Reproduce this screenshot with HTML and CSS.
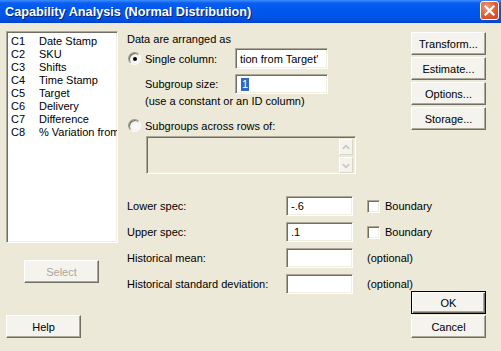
FILE: index.html
```html
<!DOCTYPE html>
<html>
<head>
<meta charset="utf-8">
<link rel="stylesheet" href="styles.css">
</head>
<body>
<div class="window">
  <div class="titlebar">
    <span class="title">Capability Analysis (Normal Distribution)</span>
    <span class="close"><svg width="17" height="17" viewBox="0 0 17 17"><path d="M4.5 4.5 L12.5 12.5 M12.5 4.5 L4.5 12.5" stroke="#fff" stroke-width="2.2" stroke-linecap="square"/></svg></span>
  </div>
  <div class="client">
    <div class="col-left">
      <div class="listbox">
        <div class="item"><span class="cid">C1</span><span class="cname">Date Stamp</span></div>
        <div class="item"><span class="cid">C2</span><span class="cname">SKU</span></div>
        <div class="item"><span class="cid">C3</span><span class="cname">Shifts</span></div>
        <div class="item"><span class="cid">C4</span><span class="cname">Time Stamp</span></div>
        <div class="item"><span class="cid">C5</span><span class="cname">Target</span></div>
        <div class="item"><span class="cid">C6</span><span class="cname">Delivery</span></div>
        <div class="item"><span class="cid">C7</span><span class="cname">Difference</span></div>
        <div class="item"><span class="cid">C8</span><span class="cname">% Variation from</span></div>
      </div>
      <div class="btn btn-select disabled">Select</div>
      <div class="btn btn-help">Help</div>
    </div>
    <div class="col-mid">
      <div class="group-label">Data are arranged as</div>
      <div class="row row-single">
        <span class="radio checked"><span class="dot"></span></span>
        <span class="rlabel">Single column:</span>
        <span class="field field-wide">tion from Target'</span>
      </div>
      <div class="row row-sub">
        <span class="sublabel">Subgroup size:</span>
        <span class="field field-wide"><span class="sel">1</span></span>
      </div>
      <div class="hint">(use a constant or an ID column)</div>
      <div class="row row-radio2">
        <span class="radio"></span>
        <span class="rlabel">Subgroups across rows of:</span>
      </div>
      <div class="multibox">
        <div class="spin">
          <span class="sbtn"><svg width="13" height="15" viewBox="0 0 13 15"><path d="M3 9 L6.5 5.5 L10 9" fill="none" stroke="#C9C7BA" stroke-width="1.6"/></svg></span>
          <span class="sbtn"><svg width="13" height="15" viewBox="0 0 13 15"><path d="M3 6 L6.5 9.5 L10 6" fill="none" stroke="#C9C7BA" stroke-width="1.6"/></svg></span>
        </div>
      </div>
      <div class="spec-row first">
        <span class="slabel">Lower spec:</span>
        <span class="field field-spec">-.6</span>
        <span class="check"></span>
        <span class="clabel">Boundary</span>
      </div>
      <div class="spec-row">
        <span class="slabel">Upper spec:</span>
        <span class="field field-spec">.1</span>
        <span class="check"></span>
        <span class="clabel">Boundary</span>
      </div>
      <div class="spec-row">
        <span class="slabel">Historical mean:</span>
        <span class="field field-spec"></span>
        <span class="opt">(optional)</span>
      </div>
      <div class="spec-row">
        <span class="slabel">Historical standard deviation:</span>
        <span class="field field-spec"></span>
        <span class="opt">(optional)</span>
      </div>
    </div>
    <div class="col-right">
      <div class="btn btn-first">Transform...</div>
      <div class="btn">Estimate...</div>
      <div class="btn">Options...</div>
      <div class="btn">Storage...</div>
      <div class="btn btn-ok">OK</div>
      <div class="btn btn-cancel">Cancel</div>
    </div>
  </div>
</div>
</body>
</html>
```
FILE: styles.css
```css
* { box-sizing: border-box; }
html, body { margin: 0; padding: 0; }
body {
  width: 501px;
  height: 351px;
  overflow: hidden;
  background: #ECE9D8;
  font-family: "Liberation Sans", Arial, sans-serif;
  font-size: 11px;
  color: #000;
}
.window { width: 501px; height: 351px; display: flex; flex-direction: column; }
.titlebar {
  height: 23px;
  flex: none;
  display: flex;
  align-items: center;
  justify-content: space-between;
  padding: 0 2px 0 5px;
  background: linear-gradient(to bottom, #3D8DFF 0px, #0A5FF0 3px, #0058EE 8px, #0055EA 16px, #0050E0 20px, #0040C8 23px);
}
.title {
  color: #fff;
  font-family: "Liberation Sans", Arial, sans-serif;
  font-weight: bold;
  font-size: 12.7px;
  text-shadow: 1px 1px 0 #0A1E6E;
}
.close {
  width: 19px;
  height: 19px;
  margin-top: -3px;
  border: 1px solid #fff;
  border-radius: 3px;
  background: radial-gradient(circle at 35% 30%, #F39B7D 0%, #E35A2E 55%, #C8421C 100%);
  display: flex;
  align-items: center;
  justify-content: center;
}
.client { flex: 1; display: flex; }

.col-left { width: 127px; flex: none; padding-left: 6px; display: flex; flex-direction: column; }
.listbox {
  margin-top: 8px;
  width: 112px;
  height: 212px;
  background: #fff;
  border: 1px solid;
  border-color: #ACA899 #fff #fff #ACA899;
  box-shadow: inset 1px 1px #716F64, inset -1px -1px #F1EFE2;
  padding: 3px 0 0 4px;
  overflow: hidden;
}
.item { height: 13px; line-height: 13px; display: flex; white-space: nowrap; }
.cid { width: 28px; flex: none; }
.cname { flex: none; }

.btn {
  width: 75px;
  height: 23px;
  display: flex;
  align-items: center;
  justify-content: center;
  background: #F4F3EE;
  border: 1px solid;
  border-color: #fff #716F64 #716F64 #fff;
  box-shadow: inset -1px -1px #ACA899;
  flex: none;
}
.disabled { color: #ACA899; }
.btn-select { margin-top: 17px; margin-left: 18px; }
.btn-help { margin-top: 32px; }

.col-mid { width: 284px; flex: none; display: flex; flex-direction: column; }
.group-label { margin-top: 10px; line-height: 13px; height: 13px; }
.row { display: flex; align-items: center; }
.row-single { margin-top: 2px; height: 21px; }
.row-single .field { height: 21px; }
.row-sub { margin-top: 5px; height: 20px; padding-left: 18px; }
.sublabel { width: 90px; flex: none; }
.radio {
  width: 13px;
  height: 13px;
  margin-left: 1px;
  margin-right: 4px;
  border-radius: 50%;
  border: 1px solid;
  border-color: #9D9B8E #fff #fff #9D9B8E;
  background: radial-gradient(circle at 60% 60%, #fff 0%, #F3F2EC 50%, #DCDAD0 100%);
  box-shadow: inset 1px 1px #716F64;
  display: flex;
  align-items: center;
  justify-content: center;
  flex: none;
}
.dot { width: 4px; height: 4px; border-radius: 50%; background: #000; }
.rlabel { width: 90px; flex: none; white-space: nowrap; }
.field {
  display: flex;
  align-items: center;
  background: #fff;
  border: 1px solid;
  border-color: #ACA899 #fff #fff #ACA899;
  box-shadow: inset 1px 1px #716F64, inset -1px -1px #F1EFE2;
  padding-left: 4px;
  white-space: nowrap;
  overflow: hidden;
  flex: none;
}
.field-wide { width: 93px; height: 20px; }
.sel { background: #316AC5; color: #fff; padding: 0 1px; line-height: 13px; margin-left: 1px; }
.hint { margin-top: 1px; line-height: 13px; height: 13px; padding-left: 18px; }
.row-radio2 { margin-top: 11px; height: 13px; }
.multibox {
  margin-top: 4px;
  margin-left: 19px;
  width: 210px;
  height: 38px;
  border: 1px solid;
  border-color: #ACA899 #fff #fff #ACA899;
  box-shadow: inset 1px 1px #716F64, inset -1px -1px #F1EFE2;
  display: flex;
  justify-content: flex-end;
  padding: 2px 2px 2px 0;
}
.spin { display: flex; flex-direction: column; gap: 2px; }
.sbtn {
  width: 14px;
  height: 16px;
  background: #F4F3EE;
  border: 1px solid;
  border-color: #fff #D8D6CB #D8D6CB #fff;
  display: flex;
  align-items: center;
  justify-content: center;
}
.spec-row { display: flex; align-items: center; height: 20px; margin-top: 6px; }
.spec-row.first { margin-top: 22px; }
.slabel { width: 159px; flex: none; white-space: nowrap; }
.field-spec { width: 67px; height: 20px; }
.check {
  width: 13px;
  height: 13px;
  flex: none;
  margin-left: 14px;
  margin-right: 5px;
  background: #fff;
  border: 1px solid;
  border-color: #ACA899 #fff #fff #ACA899;
  box-shadow: inset 1px 1px #716F64, inset -1px -1px #F1EFE2;
}
.clabel, .opt { flex: none; white-space: nowrap; }
.opt { margin-left: 14px; }

.col-right { width: 90px; flex: none; display: flex; flex-direction: column; padding-bottom: 13px; }
.col-right .btn { margin-top: 2px; }
.col-right .btn-first { margin-top: 9px; }
.col-right .btn-ok {
  margin-top: auto;
  border: 1px solid #000;
  box-shadow: inset 1px 1px #fff, inset -1px -1px #716F64, inset -2px -2px #ACA899;
}
.col-right .btn-cancel { margin-top: 1px; }
```
